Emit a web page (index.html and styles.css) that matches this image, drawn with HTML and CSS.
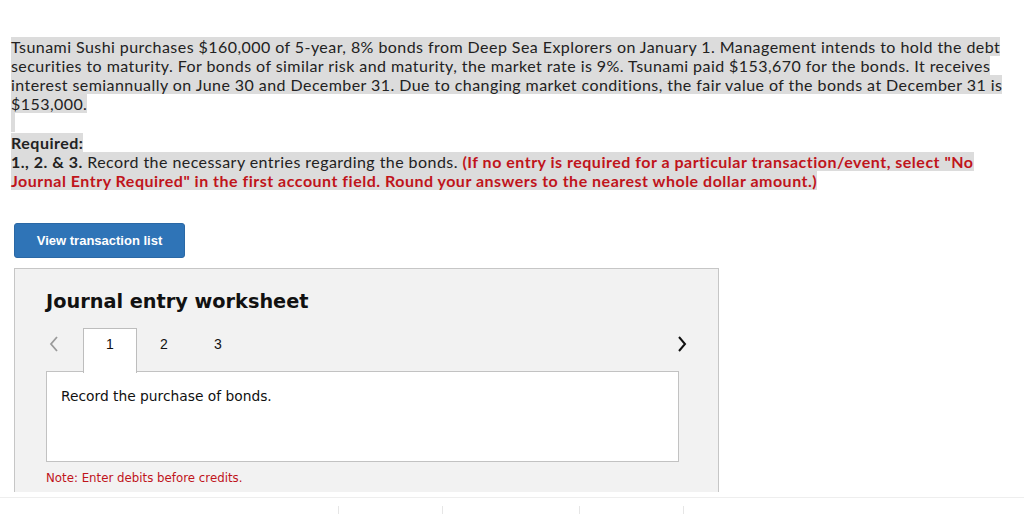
FILE: index.html
```html
<!DOCTYPE html>
<html>
<head>
<meta charset="utf-8">
<link rel="stylesheet" href="styles.css">
</head>
<body>
<div class="page">
  <p class="intro"><span class="hl">Tsunami Sushi purchases $160,000 of 5-year, 8% bonds from Deep Sea Explorers on January 1. Management intends to hold the debt<br>securities to maturity. For bonds of similar risk and maturity, the market rate is 9%. Tsunami paid $153,670 for the bonds. It receives<br>interest semiannually on June 30 and December 31. Due to changing market conditions, the fair value of the bonds at December 31 is<br>$153,000.<br><span class="gap"></span></span></p>
  <p class="req"><span class="hl"><b>Required:</b><br><b>1., 2. &amp; 3.</b> Record the necessary entries regarding the bonds. <b class="red">(If no entry is required for a particular transaction/event, select "No<br>Journal Entry Required" in the first account field. Round your answers to the nearest whole dollar amount.)</b></span></p>
  <button class="btn">View transaction list</button>
  <div class="panel">
    <h2 class="title">Journal entry worksheet</h2>
    <div class="tabs">
      <span class="arrow left"><svg width="10" height="16" viewBox="0 0 10 16"><path d="M8 1 L2 8 L8 15" fill="none" stroke="#9a9a9a" stroke-width="1.8"/></svg></span>
      <span class="tab active">1</span>
      <span class="tab">2</span>
      <span class="tab">3</span>
      <span class="spacer"></span>
      <span class="arrow right"><svg width="10" height="16" viewBox="0 0 10 16"><path d="M2 1 L8 8 L2 15" fill="none" stroke="#111" stroke-width="2"/></svg></span>
    </div>
    <div class="content">Record the purchase of bonds.</div>
    <div class="note">Note: Enter debits before credits.</div>
  </div>
  <div class="footer">
    <span class="sep s1"></span><span class="sep s2"></span><span class="sep s3"></span><span class="sep s4"></span>
  </div>
</div>
</body>
</html>
```
FILE: styles.css
```css
html, body { margin: 0; padding: 0; background: #fff; }
.page { width: 1024px; height: 514px; overflow: hidden; position: relative; }
.intro, .req {
  margin: 0;
  padding-left: 11px;
  font-family: Lato, "Liberation Sans", sans-serif;
  font-size: 16px;
  letter-spacing: 0.44px;
  line-height: 19px;
  color: #222;
}
.intro { padding-top: 37px; }
.req { padding-top: 1px; }
.req b { font-weight: 700; letter-spacing: 0.5px; }
.hl { background: #dcdcdc; }
.gap { display: inline-block; width: 4px; height: 6px; }
.red { color: #c0141b; }
.btn {
  display: block;
  margin: 33px 0 0 14px;
  width: 171px;
  height: 35px;
  background: #2f74b7;
  border: 1px solid #2a68a5;
  border-radius: 3px;
  color: #fff;
  font-family: "Liberation Sans", Arial, sans-serif;
  font-weight: bold;
  font-size: 13px;
  padding: 0;
}
.panel {
  margin: 10px 0 0 14px;
  width: 705px;
  height: 224px;
  background: #f2f2f2;
  border: 1px solid #c6c6c6;
  border-bottom: none;
  box-sizing: border-box;
  padding: 0 0 0 31px;
}
.title {
  margin: 21px 0 0 0;
  font-family: "DejaVu Sans", Verdana, sans-serif;
  font-weight: bold;
  font-size: 19.3px;
  line-height: 24px;
  color: #111;
}
.tabs {
  display: flex;
  align-items: flex-start;
  height: 44px;
  margin-top: 14px;
  width: 645px;
  position: relative;
  z-index: 1;
}
.arrow { display: flex; align-items: center; height: 16px; margin-top: 8px; }
.arrow.left { width: 37px; padding-left: 3px; box-sizing: border-box; }
.tab {
  width: 54px;
  height: 44px;
  display: flex;
  justify-content: center;
  padding-top: 8px;
  font-family: "Liberation Sans", Arial, sans-serif;
  font-size: 14px;
  line-height: 16px;
  color: #111;
  box-sizing: border-box;
}
.tab.active {
  background: #fff;
  border: 1px solid #bdbdbd;
  border-bottom: none;
  height: 45px;
  padding-top: 7px;
}
.spacer { flex: 1; }
.arrow.right { width: 14px; }
.content {
  width: 633px;
  height: 91px;
  box-sizing: border-box;
  background: #fff;
  border: 1px solid #c2c2c2;
  padding: 16px 0 0 14px;
  font-family: "DejaVu Sans", Verdana, sans-serif;
  font-size: 13.8px;
  color: #111;
  margin-top: -1px;
}
.note {
  margin-top: 9px;
  font-family: "DejaVu Sans", Verdana, sans-serif;
  font-size: 11.8px;
  color: #c0141b;
}
.footer {
  position: absolute;
  left: 0; right: 0; top: 497px; height: 17px;
  border-top: 1px solid #eeeeee;
}
.sep { position: absolute; top: 8px; height: 10px; width: 1px; background: #e6e6e6; }
.s1 { left: 338px; } .s2 { left: 442px; } .s3 { left: 579px; } .s4 { left: 683px; }
```
